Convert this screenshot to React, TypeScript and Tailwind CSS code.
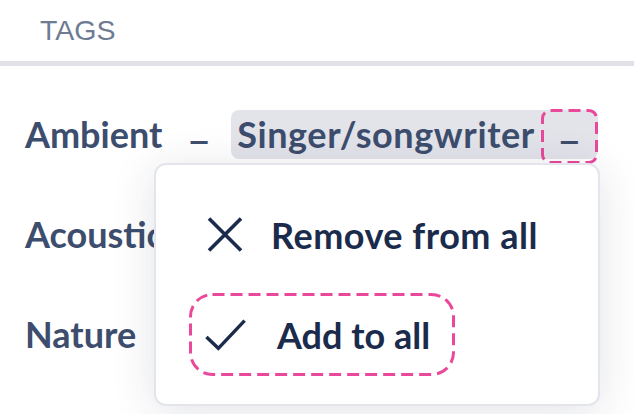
import React from "react";

function Dashed({ w, h, r }: { w: number; h: number; r: number }) {
  return (
    <svg
      className="absolute left-0 top-0 pointer-events-none"
      width={w}
      height={h}
      viewBox={`0 0 ${w} ${h}`}
    >
      <rect
        x={1.5}
        y={1.5}
        width={w - 3}
        height={h - 3}
        rx={r}
        fill="none"
        stroke="#e9489b"
        strokeWidth={3}
        strokeDasharray="12 6"
      />
    </svg>
  );
}

export default function App() {
  const label = "font-['Lato',sans-serif] font-bold text-[36px] leading-none text-[#3d4d6d]";
  const menuText =
    "ml-[30px] font-['Lato',sans-serif] font-bold text-[36px] leading-none text-[#1b2b4b] whitespace-nowrap";
  return (
    <div className="relative w-[634px] h-[414px] bg-white overflow-hidden">
      <div className="h-[61px] pl-[40px] pt-[16px]">
        <div className="font-['Liberation_Sans',sans-serif] text-[28.5px] leading-[28px] text-[#6e7b92]">
          TAGS
        </div>
      </div>
      <div className="h-[5px] bg-[#e1e1e7]" />
      <div className="pt-[18px]">
        <div className="h-[100px] flex items-center pl-[25px]">
          <span className={label}>Ambient</span>
          <span className={`${label} ml-[27px] inline-block origin-left scale-x-[1.2] -translate-y-[9px]`}>_</span>
          <div className="ml-[25px] flex items-center h-[49px] rounded-[8px] bg-[#e3e4ea] pl-[6px]">
            <span className={`${label} tracking-[0.6px]`}>Singer/songwriter</span>
            <div className="relative ml-[6px] w-[57px] h-[49px] flex items-center justify-center">
              <span className={`${label} inline-block scale-x-[1.2] -translate-y-[9px]`}>_</span>
              <div className="absolute left-0 -top-[1px] w-[57px] h-[55px]">
                <Dashed w={57} h={55} r={8} />
              </div>
            </div>
          </div>
        </div>
        <div className="h-[100px] flex items-center pl-[25px]">
          <span className={label}>Acoustic</span>
        </div>
        <div className="h-[100px] flex items-center pl-[25px]">
          <span className={label}>Nature</span>
        </div>
      </div>

      <div className="absolute left-[154px] top-[163px] w-[446px] h-[243px] rounded-[12px] border-2 border-[#e3e5ea] bg-white shadow-[0_6px_44px_rgba(30,40,70,0.13)] pt-[28px] pl-[33px]">
        <div className="flex flex-col gap-[17px]">
          <div className="relative flex items-center h-[83px] w-[266px] pl-[16px]">
            <div className="w-[42px] flex justify-center">
              <svg width="36" height="35" viewBox="0 0 36 35" className="translate-x-[2px]">
                <path d="M2 1.5 L34 33.5 M34 1.5 L2 33.5" stroke="#1b2b4b" strokeWidth="3.6" fill="none" />
              </svg>
            </div>
            <span className={`${menuText} tracking-[0.5px]`}>Remove from all</span>
          </div>
          <div className="relative flex items-center h-[83px] w-[266px] pl-[16px]">
            <div className="w-[42px] flex justify-center">
              <svg width="44" height="34" viewBox="0 0 44 34">
                <path d="M1.5 19 L14 31 L41.5 2" stroke="#1b2b4b" strokeWidth="3.6" fill="none" />
              </svg>
            </div>
            <span className={menuText}>Add to all</span>
            <Dashed w={266} h={83} r={22} />
          </div>
        </div>
      </div>
    </div>
  );
}
